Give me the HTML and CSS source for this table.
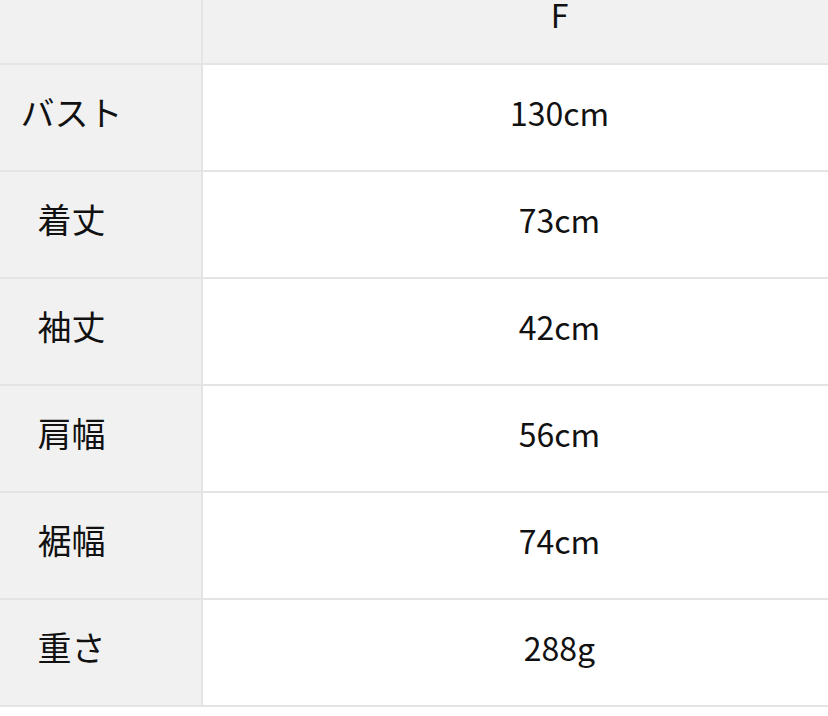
FILE: index.html
```html
<!DOCTYPE html>
<html lang="ja">
<head>
<meta charset="utf-8">
<title>サイズ表</title>
<link rel="stylesheet" href="styles.css">
</head>
<body>
<table class="size-table">
  <thead>
    <tr class="head-row">
      <th class="label-cell"></th>
      <th class="value-cell head-value">F</th>
    </tr>
  </thead>
  <tbody>
    <tr class="data-row"><th class="label-cell">バスト</th><td class="value-cell">130cm</td></tr>
    <tr class="data-row"><th class="label-cell">着丈</th><td class="value-cell">73cm</td></tr>
    <tr class="data-row"><th class="label-cell">袖丈</th><td class="value-cell">42cm</td></tr>
    <tr class="data-row"><th class="label-cell">肩幅</th><td class="value-cell">56cm</td></tr>
    <tr class="data-row"><th class="label-cell">裾幅</th><td class="value-cell">74cm</td></tr>
    <tr class="data-row"><th class="label-cell">重さ</th><td class="value-cell">288g</td></tr>
  </tbody>
</table>
</body>
</html>
```
FILE: styles.css
```css
html, body {
  margin: 0;
  padding: 0;
  background: #ffffff;
  overflow: hidden;
}

.size-table {
  border-collapse: collapse;
  table-layout: fixed;
  width: 916px;
  font-family: "Noto Sans CJK JP", "Noto Sans", sans-serif;
  font-size: 34px;
  font-weight: 400;
  color: #111111;
}

.size-table th,
.size-table td {
  padding: 0;
  border-bottom: 2px solid #e4e4e4;
  font-weight: 400;
  vertical-align: middle;
  line-height: 40px;
}

.label-cell {
  width: 143px;
  padding-right: 58px !important;
  background: #f1f1f1;
  border-right: 2px solid #e4e4e4;
  text-align: center;
}

.value-cell {
  background: #ffffff;
  text-align: center;
  font-size: 32px;
}

.head-row {
  height: 64px;
}

.head-row th {
  background: #f1f1f1;
  vertical-align: top;
  line-height: 28px;
}

.data-row {
  height: 107px;
}

.data-row th,
.data-row td {
  padding-bottom: 12px;
}
```
